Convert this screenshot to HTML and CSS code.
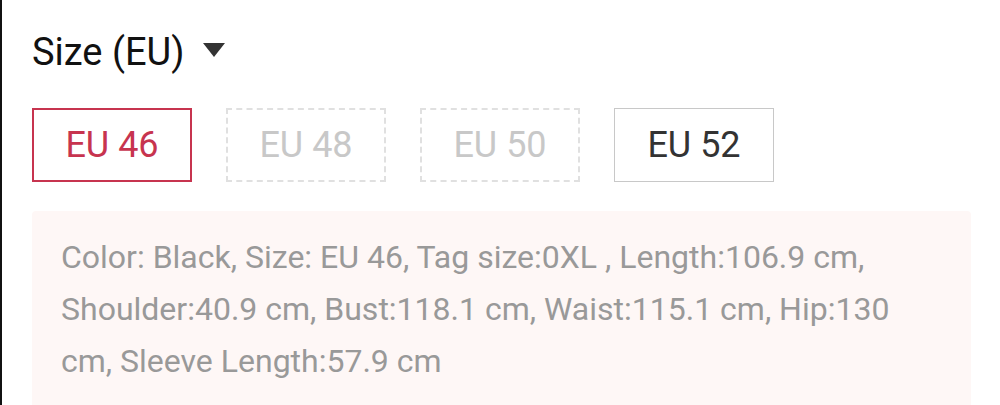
FILE: index.html
```html
<!DOCTYPE html>
<html>
<head>
<meta charset="utf-8">
<link rel="stylesheet" href="styles.css">
</head>
<body>
<div class="panel">
  <div class="title">
    <span class="title-text">Size (EU)</span>
    <svg class="caret" width="22" height="14" viewBox="0 0 22 14"><path d="M0 0 H22 L11 14 Z" fill="#333"/></svg>
  </div>
  <div class="sizes">
    <div class="size selected">EU 46</div>
    <div class="size disabled">EU 48</div>
    <div class="size disabled">EU 50</div>
    <div class="size">EU 52</div>
  </div>
  <div class="info">Color: Black, Size: EU 46, Tag size:0XL , Length:106.9 cm, Shoulder:40.9 cm, Bust:118.1 cm, Waist:115.1 cm, Hip:130 cm, Sleeve Length:57.9 cm</div>
</div>
</body>
</html>
```

FILE: styles.css
```css
html, body {
  margin: 0;
  padding: 0;
  background: #fff;
}
body {
  font-family: Roboto, "Noto Sans", Arial, sans-serif;
  width: 1000px;
  height: 405px;
  overflow: hidden;
}
.panel {
  border-left: 2px solid #111;
  padding: 30px 29px 0 30px;
  height: 405px;
  box-sizing: border-box;
}
.title {
  display: flex;
  align-items: center;
  height: 44px;
}
.title-text {
  font-size: 38px;
  color: #111;
  line-height: 44px;
}
.caret {
  margin-left: 19px;
  margin-top: -4px;
}
.sizes {
  display: flex;
  gap: 34px;
  margin-top: 34px;
}
.size {
  box-sizing: border-box;
  width: 160px;
  height: 74px;
  border: 1.5px solid #c8c8c8;
  display: flex;
  align-items: center;
  justify-content: center;
  font-size: 36px;
  color: #333;
}
.size.selected {
  border: 2px solid #c7344f;
  color: #c7344f;
}
.size.disabled {
  border: 2px dashed #e0e0e0;
  color: #c8c8c8;
}
.info {
  margin-top: 29px;
  background: #fef7f6;
  border-radius: 4px;
  padding: 20px 28px 30px 29px;
  font-size: 32px;
  line-height: 52px;
  color: #999;
}
```
